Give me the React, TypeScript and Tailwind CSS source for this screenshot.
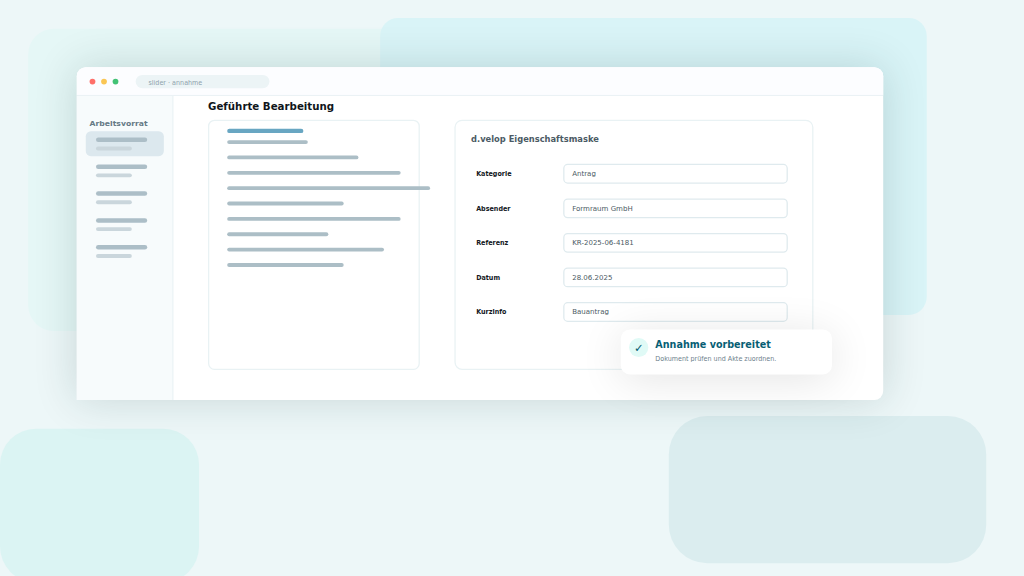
interface Field {
  label: string;
  value: string;
}

const fields: Field[] = [
  { label: 'Kategorie', value: 'Antrag' },
  { label: 'Absender', value: 'Formraum GmbH' },
  { label: 'Referenz', value: 'KR-2025-06-4181' },
  { label: 'Datum', value: '28.06.2025' },
  { label: 'Kurzinfo', value: 'Bauantrag' },
];

const documentLines = [126, 205, 271, 317, 182, 271, 158, 245, 182];

function Backdrop() {
  return (
    <>
      <div className="absolute left-[44px] top-[45px] h-[472px] w-[900px] rounded-[40px] bg-[#e5f7f6]" />
      <div className="absolute left-[594px] top-[28px] h-[464px] w-[854px] rounded-[28px] bg-[#d9f4f7]" />
      <div className="absolute left-0 top-[670px] h-[240px] w-[311px] rounded-[56px] bg-[#dbf4f3]" />
      <div className="absolute left-[1045px] top-[650px] h-[230px] w-[496px] rounded-[60px] bg-[#dbedef]" />
    </>
  );
}

function TitleBar() {
  return (
    <header className="flex h-[45px] shrink-0 items-center rounded-t-[14px] border-b-2 border-[#ebf2f5] bg-[#fcfdff] pl-5 pt-px">
      <div className="flex gap-[9px]">
        <span className="size-[9px] rounded-full bg-[#ff6f69]" />
        <span className="size-[9px] rounded-full bg-[#fac654]" />
        <span className="size-[9px] rounded-full bg-[#42c275]" />
      </div>
      <div className="ml-[27px] flex h-[21px] w-[209px] items-center rounded-full bg-[#ecf4f6] pl-5 pt-[5px] text-[10px] text-[#8ca1ab]">
        slider · annahme
      </div>
    </header>
  );
}

function Sidebar() {
  return (
    <aside className="w-[151px] shrink-0 border-r-2 border-[#edf3f6] bg-[#f7fbfc] pl-[14px]">
      <h2 className="mt-[35px] pl-[6px] text-[12px] leading-[16px] font-bold text-[#667a86]">Arbeitsvorrat</h2>
      <ul className="mt-[3.5px] flex flex-col gap-[3px]">
        {[0, 1, 2, 3, 4].map((item) => (
          <li
            key={item}
            className={`h-[39px] w-[122px] rounded-[8px] pl-4 pt-[10px] ${item === 0 ? 'bg-[#dce8ee]' : ''}`}
          >
            <div className="h-[7px] w-20 rounded-full bg-[#acbec7]" />
            <div className="mt-[7px] h-[6px] w-14 rounded-full bg-[#cad6dc]" />
          </li>
        ))}
      </ul>
    </aside>
  );
}

function DocumentPreview() {
  return (
    <section className="h-[391px] w-[331px] shrink-0 rounded-[10px] border-2 border-[#e9f2f4] pl-7 pt-3">
      <div className="h-[7px] w-[119px] rounded-full bg-[#68a6c2]" />
      <div className="mt-[11px] flex flex-col gap-[18px]">
        {documentLines.map((width, i) => (
          <div key={i} className="h-[6px] rounded-full bg-[#acbec6]" style={{ width }} />
        ))}
      </div>
    </section>
  );
}

function PropertyForm() {
  return (
    <section className="ml-[54px] h-[391px] w-[561px] shrink-0 rounded-[12px] border-2 border-[#e9f2f4] pl-6">
      <h3 className="mt-[20px] text-[13px] leading-[18px] font-bold text-[#4b5a64]">d.velop Eigenschaftsmaske</h3>
      <div className="mt-[29px] flex flex-col gap-[23px] pl-2">
        {fields.map((field) => (
          <div key={field.label} className="flex h-[31px] items-center">
            <span className="w-[136px] pb-px text-[10px] font-bold text-[#14191e]">{field.label}</span>
            <div className="flex h-full w-[351px] items-center rounded-[7px] border-2 border-[#dfeaee] pl-3 pt-px text-[11px] text-[#4b5a64]">
              {field.value}
            </div>
          </div>
        ))}
      </div>
    </section>
  );
}

function Toast() {
  return (
    <div className="absolute left-[970px] top-[515px] flex h-[70px] w-[330px] rounded-[14px] bg-white pl-[13px] pt-[13px] shadow-[0_8px_68px_rgba(0,0,0,0.11)]">
      <span className="flex size-[30px] shrink-0 items-center justify-center rounded-full bg-[#e0faf6] pt-px text-[18px] text-[#085e74]">
        ✓
      </span>
      <div className="ml-[11px] pt-px">
        <p className="text-[15px] leading-[20px] font-bold text-[#075e74]">Annahme vorbereitet</p>
        <p className="mt-[5px] text-[10px] leading-[14px] text-[#6d808b]">Dokument prüfen und Akte zuordnen.</p>
      </div>
    </div>
  );
}

export default function App() {
  return (
    <div className="h-[576px] w-[1024px] overflow-hidden bg-[#edf7f8]">
      {/* 1600x900 stage */}
      <div className="relative h-[900px] w-[1600px] origin-top-left scale-[0.64] overflow-hidden pl-[120px] pt-[105px] font-['DejaVu_Sans',sans-serif]">
        <Backdrop />
        <div className="relative flex h-[520px] w-[1260px] flex-col rounded-[14px] rounded-bl-none bg-white shadow-[0_0_66px_rgba(10,50,50,0.16)]">
          <TitleBar />
          <div className="flex min-h-0 flex-1">
            <Sidebar />
            <main className="min-w-0 flex-1 pl-[54px]">
              <h1 className="mt-[6px] text-[16px] leading-[22px] font-bold text-[#10151a]">Geführte Bearbeitung</h1>
              <div className="mt-[9px] flex">
                <DocumentPreview />
                <PropertyForm />
              </div>
            </main>
          </div>
        </div>
        <Toast />
      </div>
    </div>
  );
}
